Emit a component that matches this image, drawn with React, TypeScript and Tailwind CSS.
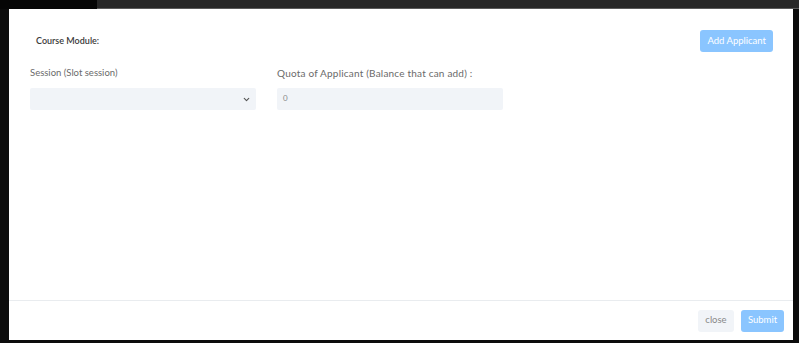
import React from 'react'

const App: React.FC = () => {
  return (
    <div className="w-[799px] h-[343px] bg-[#0c0c0c] flex flex-col overflow-hidden font-['Lato',sans-serif]">
      <div className="h-[9px] flex shrink-0">
        <div className="w-[97px] bg-[#060606]" />
        <div className="flex-1 bg-[#272727] border-b border-[#5a5a5a]" />
      </div>
      <div className="flex flex-1 pl-[9px] pr-[6px] pb-[3px]">
        <div className="flex-1 bg-white flex flex-col">
          <div className="flex-1 px-[21px] pt-[21px]">
            <div className="flex items-start justify-between">
              <div className="pl-[6px] pt-[5px] text-[9px] font-semibold text-[#3a3a3a] leading-[12px]">
                Course Module:
              </div>
              <button className="h-[22px] px-[7px] bg-[#8ac5ff] text-white text-[9.5px] rounded-[3px] mr-[-1px]">
                Add Applicant
              </button>
            </div>
            <div className="flex gap-[21px] mt-[15px]">
              <div className="w-[226px]">
                <div className="text-[9.5px] text-[#6a6a6a] leading-[12px]">Session (Slot session)</div>
                <div className="mt-[9px] h-[22px] bg-[#f1f4f8] rounded-[2px] flex items-center justify-end pr-[5px]">
                  <svg width="9" height="9" viewBox="0 0 24 24" fill="none" stroke="#555" strokeWidth="3" strokeLinecap="round" strokeLinejoin="round">
                    <path d="M6 9l6 6 6-6" />
                  </svg>
                </div>
              </div>
              <div className="w-[226px]">
                <div className="text-[10px] tracking-[0.2px] text-[#6a6a6a] leading-[12px] whitespace-nowrap">
                  Quota of Applicant (Balance that can add) :
                </div>
                <div className="mt-[9px] h-[22px] bg-[#f1f4f8] rounded-[2px] flex items-start pt-[4px] pl-[6px] text-[8px] text-[#888]">
                  0
                </div>
              </div>
            </div>
          </div>
          <div className="h-[40px] border-t border-[#e9ecef] flex items-center justify-end gap-[7px] pr-[9px]">
            <button className="h-[22px] w-[36px] bg-[#f1f4f8] text-[#888] text-[9.5px] rounded-[3px]">close</button>
            <button className="h-[22px] w-[43px] bg-[#8ac5ff] text-white text-[9.5px] rounded-[3px]">Submit</button>
          </div>
        </div>
      </div>
    </div>
  )
}

export default App
